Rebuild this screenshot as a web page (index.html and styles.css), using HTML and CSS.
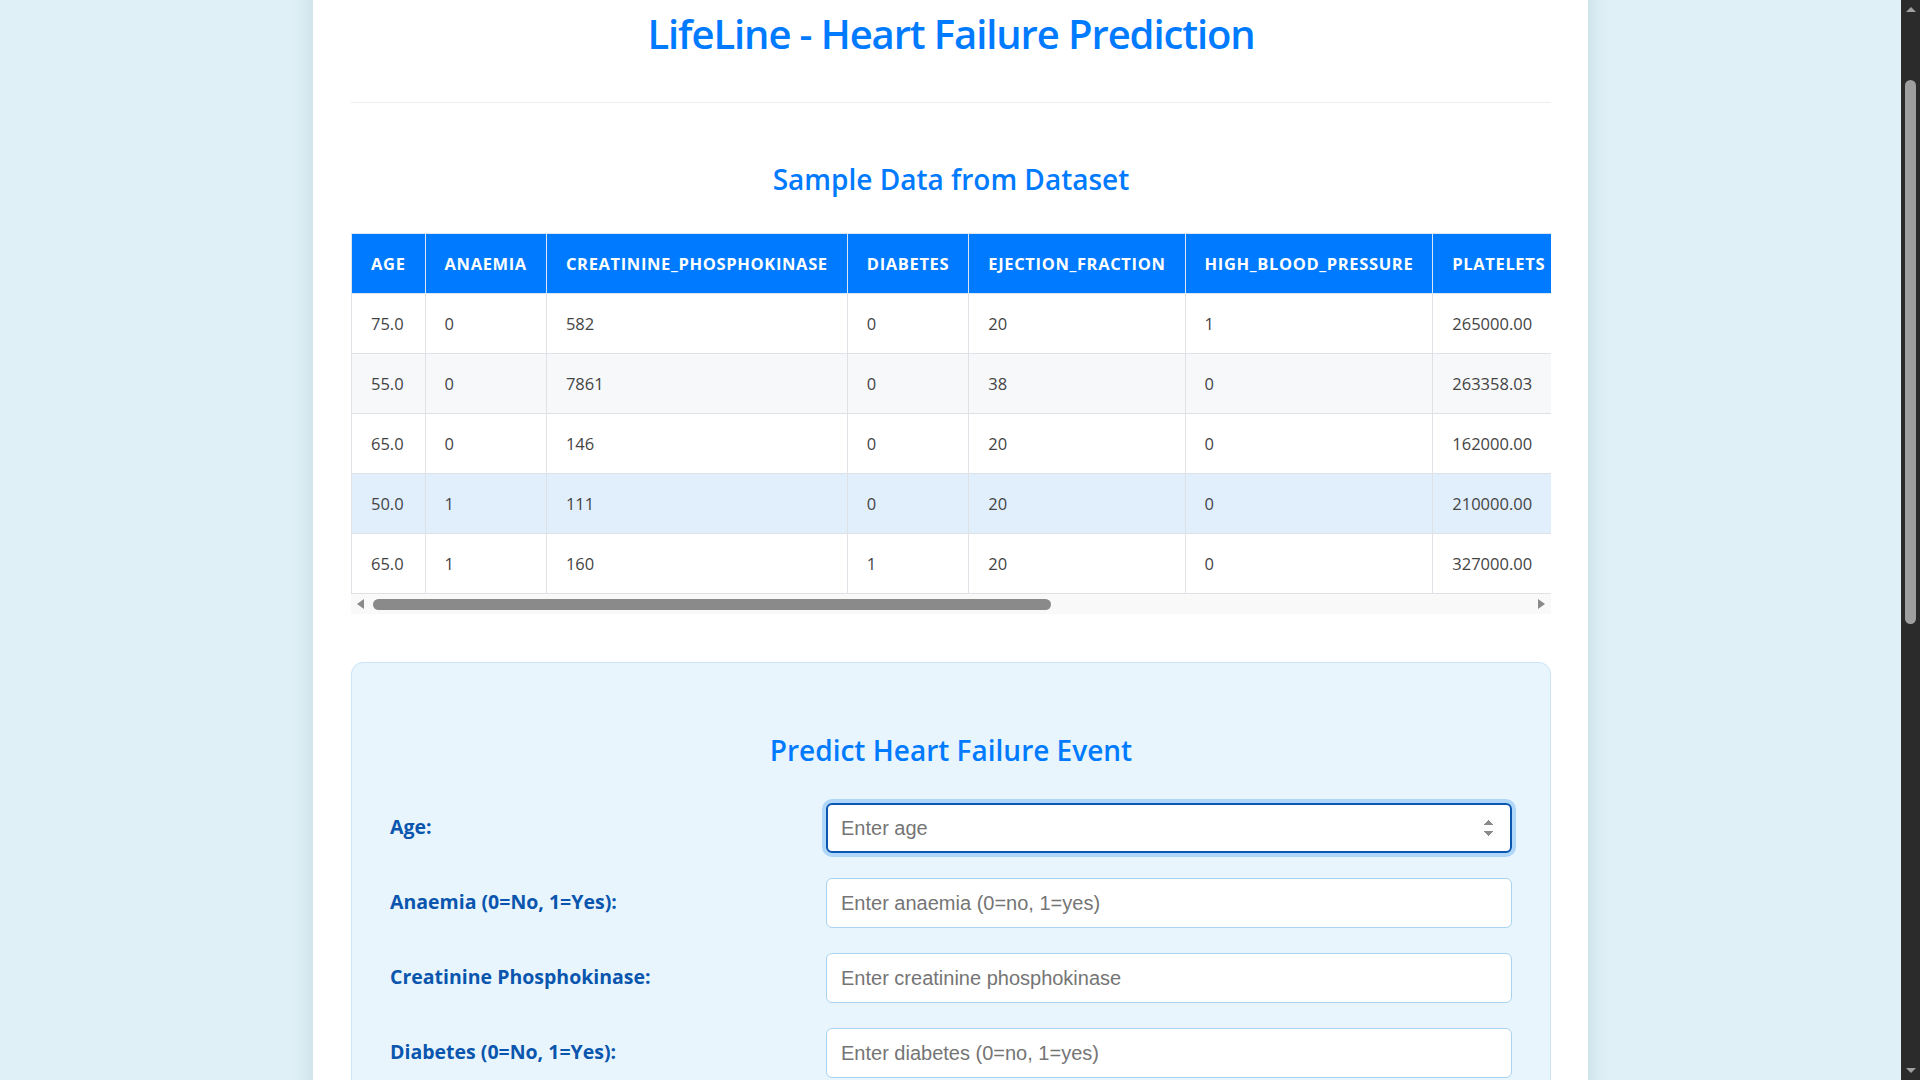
FILE: index.html
```html
<!DOCTYPE html>
<html lang="en">
<head>
<meta charset="utf-8">
<title>LifeLine - Heart Failure Prediction</title>
<link rel="stylesheet" href="styles.css">
</head>
<body>
<div class="container">
  <header class="page-header">
    <h1 class="page-title">LifeLine - Heart Failure Prediction</h1>
  </header>

  <section class="dataset">
    <h2 class="section-title">Sample Data from Dataset</h2>
    <div class="table-wrap">
      <table class="data-table">
        <thead>
          <tr>
            <th>AGE</th><th>ANAEMIA</th><th>CREATININE_PHOSPHOKINASE</th><th>DIABETES</th><th>EJECTION_FRACTION</th><th>HIGH_BLOOD_PRESSURE</th><th class="col-last">PLATELETS</th>
          </tr>
        </thead>
        <tbody>
          <tr><td>75.0</td><td>0</td><td>582</td><td>0</td><td>20</td><td>1</td><td class="col-last">265000.00</td></tr>
          <tr><td>55.0</td><td>0</td><td>7861</td><td>0</td><td>38</td><td>0</td><td class="col-last">263358.03</td></tr>
          <tr><td>65.0</td><td>0</td><td>146</td><td>0</td><td>20</td><td>0</td><td class="col-last">162000.00</td></tr>
          <tr class="is-hover"><td>50.0</td><td>1</td><td>111</td><td>0</td><td>20</td><td>0</td><td class="col-last">210000.00</td></tr>
          <tr><td>65.0</td><td>1</td><td>160</td><td>1</td><td>20</td><td>0</td><td class="col-last">327000.00</td></tr>
        </tbody>
      </table>
    </div>
    <div class="hscroll" aria-hidden="true">
      <span class="hscroll-arrow hscroll-left"></span>
      <span class="hscroll-track"><span class="hscroll-thumb"></span></span>
      <span class="hscroll-arrow hscroll-right"></span>
    </div>
  </section>

  <section class="predict-card">
    <h2 class="section-title card-title">Predict Heart Failure Event</h2>
    <form class="predict-form">
      <div class="field"><label for="age">Age:</label><input id="age" class="is-focused" type="number" placeholder="Enter age" autofocus></div>
      <div class="field"><label for="anaemia">Anaemia (0=No, 1=Yes):</label><input id="anaemia" type="number" placeholder="Enter anaemia (0=no, 1=yes)"></div>
      <div class="field"><label for="cpk">Creatinine Phosphokinase:</label><input id="cpk" type="number" placeholder="Enter creatinine phosphokinase"></div>
      <div class="field"><label for="diabetes">Diabetes (0=No, 1=Yes):</label><input id="diabetes" type="number" placeholder="Enter diabetes (0=no, 1=yes)"></div>
      <div class="field"><label for="ef">Ejection Fraction:</label><input id="ef" type="number" placeholder="Enter ejection fraction"></div>
      <div class="field"><label for="hbp">High Blood Pressure (0=No, 1=Yes):</label><input id="hbp" type="number" placeholder="Enter high blood pressure (0=no, 1=yes)"></div>
      <div class="field"><label for="platelets">Platelets:</label><input id="platelets" type="number" placeholder="Enter platelets"></div>
      <div class="field"><label for="sc">Serum Creatinine:</label><input id="sc" type="number" placeholder="Enter serum creatinine"></div>
      <div class="field"><label for="ss">Serum Sodium:</label><input id="ss" type="number" placeholder="Enter serum sodium"></div>
      <div class="field"><label for="sex">Sex (0=Female, 1=Male):</label><input id="sex" type="number" placeholder="Enter sex (0=female, 1=male)"></div>
      <div class="field"><label for="smoking">Smoking (0=No, 1=Yes):</label><input id="smoking" type="number" placeholder="Enter smoking (0=no, 1=yes)"></div>
      <div class="field"><label for="time">Time (Follow-up Period in Days):</label><input id="time" type="number" placeholder="Enter time"></div>
      <button type="submit" class="btn-predict">Predict</button>
    </form>
  </section>
</div>

<div class="vscroll" aria-hidden="true">
  <span class="vscroll-arrow vscroll-up"></span>
  <span class="vscroll-thumb"></span>
  <span class="vscroll-arrow vscroll-down"></span>
</div>
<script src="script.js"></script>
</body>
</html>
```
FILE: styles.css
```css
html {
  background: #dff0f6;
}

body {
  margin: 0;
  padding: 40px 19px 63px 0;
  background: #dff0f6;
  font-family: "Open Sans", "Noto Sans", sans-serif;
  color: #333;
}

.container {
  width: 1200px;
  margin: 0 auto;
  padding: 40px 37px 40px 38px;
  background: #ffffff;
  border-radius: 10px;
  box-shadow: 0 0 22px rgba(20, 70, 95, 0.13);
}

.page-header {
  padding-bottom: 44px;
  border-bottom: 1px solid #eceeef;
}

.page-title {
  margin: 55px 0 0;
  font-size: 40px;
  line-height: 48px;
  font-weight: 600;
  letter-spacing: -1.1px;
  color: #007bff;
  text-align: center;
}

.section-title {
  margin: 59px 0 37px;
  font-size: 28px;
  line-height: 34px;
  font-weight: 600;
  color: #007bff;
  text-align: center;
}

/* ---------- table ---------- */
.table-wrap {
  overflow: hidden;
}

.data-table {
  border-collapse: collapse;
  white-space: nowrap;
}

.data-table th {
  background: #007bff;
  color: #ffffff;
  font-size: 16.5px;
  font-weight: 700;
  letter-spacing: 0.65px;
  line-height: 24px;
  padding: 18px 19px 17px;
  text-align: left;
  border: 1px solid #dbe6f2;
}

.data-table td {
  font-size: 16.5px;
  line-height: 24px;
  color: #444;
  padding: 18px 19px 17px;
  border: 1px solid #dee2e6;
  background: #ffffff;
}

.data-table .col-last {
  min-width: 170px;
}

.data-table tbody tr:nth-child(even) td {
  background: #f7f8fa;
}

.data-table tbody tr.is-hover td {
  background: #e1effd;
}

/* fake horizontal scrollbar of the table */
.hscroll {
  display: flex;
  align-items: center;
  height: 20px;
  background: #f9f9f9;
}

.hscroll-arrow {
  flex: 0 0 19px;
  display: flex;
  justify-content: center;
}

.hscroll-left::before,
.hscroll-right::before {
  content: "";
  width: 0;
  height: 0;
  border-top: 5px solid transparent;
  border-bottom: 5px solid transparent;
}

.hscroll-left::before {
  border-right: 7px solid #8a8a8a;
}

.hscroll-right::before {
  border-left: 7px solid #8a8a8a;
}

.hscroll-track {
  flex: 1;
  display: flex;
  align-items: center;
}

.hscroll-thumb {
  display: block;
  width: 678px;
  height: 11px;
  margin-left: 3px;
  border-radius: 6px;
  background: #8a8a8a;
}

/* ---------- prediction card ---------- */
.predict-card {
  margin-top: 48px;
  margin-bottom: 40px;
  padding: 40px 38px;
  background: #e8f5fd;
  border: 1px solid #cbe5f7;
  border-radius: 12px;
}

.card-title {
  margin: 30px 0 36px;
}

.predict-form {
  display: flex;
  flex-direction: column;
  gap: 25px;
}

.field {
  display: grid;
  grid-template-columns: 436px 1fr;
  align-items: center;
}

.field label {
  font-size: 19.5px;
  font-weight: 700;
  color: #0a55ad;
  margin-top: -4px;
}

.field input {
  box-sizing: border-box;
  width: 100%;
  height: 50px;
  padding: 0 14px;
  border: 1px solid #a9d4f1;
  border-radius: 6px;
  background: #ffffff;
  font-family: "Liberation Sans", Arial, sans-serif;
  font-size: 20px;
  color: #333;
}

.field input::placeholder {
  color: #757575;
}

.field input:focus,
.field input.is-focused {
  outline: none;
  border: 2px solid #0b57b0;
  padding-left: 13px;
  box-shadow: 0 0 0 4px #b0d6fa;
}

.btn-predict {
  margin-top: 15px;
  height: 50px;
  border: none;
  border-radius: 6px;
  background: #007bff;
  color: #ffffff;
  font-family: "Open Sans", "Noto Sans", sans-serif;
  font-size: 20px;
  font-weight: 600;
}

/* ---------- fake page scrollbar (overlay) ---------- */
.vscroll {
  position: fixed;
  top: 0;
  right: 0;
  width: 19px;
  height: 100vh;
  background: #2b2b2b;
}

.vscroll-arrow {
  position: absolute;
  left: 0;
  width: 19px;
  height: 19px;
  display: flex;
  justify-content: center;
  align-items: center;
}

.vscroll-up {
  top: 0;
}

.vscroll-down {
  bottom: 0;
}

.vscroll-up::before,
.vscroll-down::before {
  content: "";
  width: 0;
  height: 0;
  border-left: 5px solid transparent;
  border-right: 5px solid transparent;
}

.vscroll-up::before {
  border-bottom: 5px solid #a0a0a0;
}

.vscroll-down::before {
  border-top: 5px solid #a0a0a0;
}

.vscroll-thumb {
  position: absolute;
  top: 80px;
  left: 4px;
  width: 11px;
  height: 544px;
  border-radius: 6px;
  background: #9f9f9f;
}
```
FILE: script.js
```js
(function () {
  if ('scrollRestoration' in history) {
    history.scrollRestoration = 'manual';
  }
  function place() {
    window.scrollTo(0, 125);
  }
  place();
  document.addEventListener('DOMContentLoaded', place);
  window.addEventListener('load', function () {
    var age = document.getElementById('age');
    if (age) {
      age.focus({ preventScroll: true });
    }
    place();
  });
})();
```
